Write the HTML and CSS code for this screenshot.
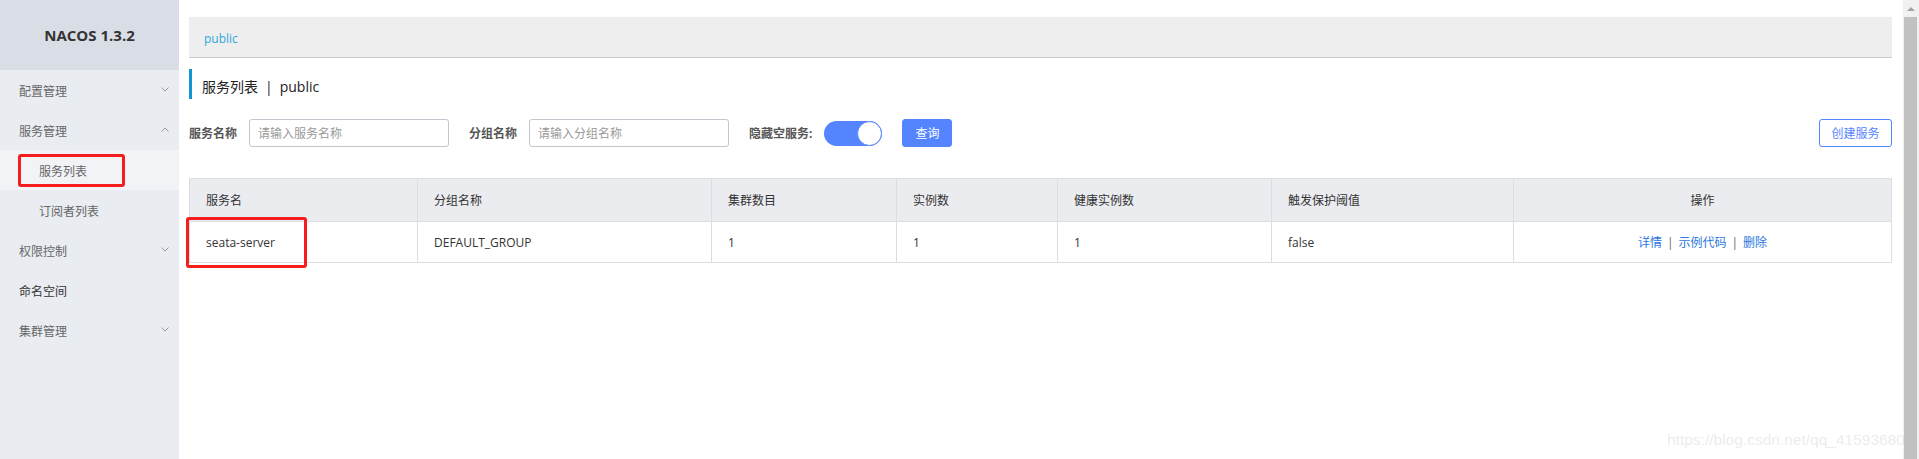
FILE: index.html
```html
<!DOCTYPE html>
<html lang="zh-CN">
<head>
    <meta charset="UTF-8">
    <title>Nacos - 服务列表</title>
    <link rel="stylesheet" href="styles.css">
</head>
<body>
<div class="layout">
    <aside class="sidebar">
        <div class="logo">NACOS 1.3.2</div>
        <ul class="menu">
            <li class="menu-item">
                <span>配置管理</span>
                <svg class="arrow" width="8" height="5" viewBox="0 0 8 5"><polyline points="0.5,0.5 4,4 7.5,0.5"/></svg>
            </li>
            <li class="menu-item">
                <span>服务管理</span>
                <svg class="arrow" width="8" height="5" viewBox="0 0 8 5"><polyline points="0.5,4.5 4,1 7.5,4.5"/></svg>
            </li>
            <li class="sub-item active">
                <span>服务列表</span>
                <i class="mark mark-menu"></i>
            </li>
            <li class="sub-item"><span>订阅者列表</span></li>
            <li class="menu-item">
                <span>权限控制</span>
                <svg class="arrow" width="8" height="5" viewBox="0 0 8 5"><polyline points="0.5,0.5 4,4 7.5,0.5"/></svg>
            </li>
            <li class="menu-item plain"><span>命名空间</span></li>
            <li class="menu-item">
                <span>集群管理</span>
                <svg class="arrow" width="8" height="5" viewBox="0 0 8 5"><polyline points="0.5,0.5 4,4 7.5,0.5"/></svg>
            </li>
        </ul>
    </aside>

    <main class="content">
        <div class="crumb"><span>public</span></div>

        <h2 class="page-title">服务列表<span class="sep">|</span>public</h2>

        <div class="search">
            <label class="field-label">服务名称</label>
            <input type="text" class="field" placeholder="请输入服务名称">
            <label class="field-label">分组名称</label>
            <input type="text" class="field" placeholder="请输入分组名称">
            <label class="field-label">隐藏空服务:</label>
            <span class="switch"><span class="knob"></span></span>
            <button class="btn btn-primary">查询</button>
            <button class="btn btn-outline">创建服务</button>
        </div>

        <table class="list">
            <colgroup>
                <col style="width: 228px">
                <col style="width: 294px">
                <col style="width: 185px">
                <col style="width: 161px">
                <col style="width: 214px">
                <col style="width: 242px">
                <col>
            </colgroup>
            <tr>
                <th>服务名</th>
                <th>分组名称</th>
                <th>集群数目</th>
                <th>实例数</th>
                <th>健康实例数</th>
                <th>触发保护阈值</th>
                <th class="center">操作</th>
            </tr>
            <tr>
                <td class="name-cell">seata-server<i class="mark mark-row"></i></td>
                <td>DEFAULT_GROUP</td>
                <td>1</td>
                <td>1</td>
                <td>1</td>
                <td>false</td>
                <td class="center">
                    <a class="link">详情</a><span class="bar">|</span><a class="link">示例代码</a><span class="bar">|</span><a class="link">删除</a>
                </td>
            </tr>
        </table>
    </main>

    <div class="scrollbar">
        <div class="scroll-up"></div>
        <div class="scroll-thumb"></div>
    </div>
</div>

<div class="watermark">https://blog.csdn.net/qq_41593680</div>
</body>
</html>
```

FILE: styles.css
```css
html, body {
    margin: 0;
    height: 459px;
    overflow: hidden;
}

body {
    font-family: "Open Sans", "Noto Sans CJK SC", sans-serif;
    font-size: 12px;
    color: #333333;
    background-color: #ffffff;
}

.layout {
    display: flex;
    height: 459px;
}

/* 左侧菜单 */
.sidebar {
    width: 179px;
    flex-shrink: 0;
    background-color: #e9ecf1;
}

.logo {
    height: 70px;
    line-height: 70px;
    text-align: center;
    background-color: #d9dde5;
    font-size: 15px;
    font-weight: bold;
    color: #333333;
}

.menu {
    list-style: none;
    margin: 0;
    padding: 0;
}

.menu-item,
.sub-item {
    display: flex;
    align-items: center;
    justify-content: space-between;
    height: 40px;
    padding: 2px 10px 0 19px;
    box-sizing: border-box;
    color: #666666;
}

.sub-item {
    padding-left: 39px;
}

.sub-item.active {
    position: relative;
    background-color: #f2f3f7;
}

.menu-item.plain {
    color: #333333;
}

.arrow {
    margin-top: -4px;
    fill: none;
    stroke: #999999;
    stroke-width: 1;
}

/* 红色标注框 */
.mark {
    position: absolute;
    box-sizing: border-box;
    border: 3px solid #f51d1d;
    border-radius: 3px;
}

.mark-menu {
    left: 18px;
    top: 4px;
    width: 107px;
    height: 33px;
}

.mark-row {
    left: -4px;
    top: -5px;
    width: 121px;
    height: 51px;
}

/* 右侧内容 */
.content {
    flex: 1;
    min-width: 0;
    padding: 17px 11px 0 10px;
}

.crumb {
    height: 40px;
    line-height: 44px;
    padding-left: 15px;
    background-color: #eeeeee;
    border-bottom: 1px solid #cccccc;
    color: #2fa9db;
}

.page-title {
    margin: 11px 0 0;
    height: 30px;
    padding: 5px 0 0 10px;
    box-sizing: border-box;
    line-height: 26px;
    border-left: 3px solid #0f97d4;
    font-size: 14px;
    font-weight: normal;
    color: #222222;
}

.sep {
    margin: 0 7px;
}

.search {
    display: flex;
    align-items: center;
    height: 28px;
    margin-top: 20px;
}

.field-label {
    margin-right: 12px;
    font-weight: bold;
    color: #555555;
}

.field {
    width: 200px;
    height: 28px;
    margin-right: 20px;
    padding: 0 8px;
    box-sizing: border-box;
    border: 1px solid #c4c6cf;
    border-radius: 3px;
    font-family: inherit;
    font-size: 12px;
    outline: none;
}

.field::placeholder {
    color: #999999;
}

.switch {
    display: flex;
    justify-content: flex-end;
    width: 58px;
    height: 25px;
    margin-right: 20px;
    border-radius: 13px;
    background-color: #5584ff;
}

.knob {
    width: 25px;
    height: 25px;
    box-sizing: border-box;
    border: 1px solid #5584ff;
    border-radius: 50%;
    background-color: #ffffff;
}

.btn {
    height: 28px;
    padding: 0;
    border-radius: 3px;
    font-family: inherit;
    font-size: 12px;
    cursor: pointer;
}

.btn-primary {
    width: 50px;
    border: 1px solid #5584ff;
    background-color: #5584ff;
    color: #ffffff;
}

.btn-outline {
    width: 73px;
    margin-left: auto;
    border: 1px solid #5584ff;
    background-color: #ffffff;
    color: #5584ff;
}

/* 服务表格 */
.list {
    width: 100%;
    margin-top: 31px;
    table-layout: fixed;
    border-collapse: collapse;
    border: 1px solid #dcdee3;
}

.list th,
.list td {
    padding: 0 16px;
    border: 1px solid #dcdee3;
    text-align: left;
    font-weight: normal;
    color: #333333;
}

.list th {
    height: 42px;
    background-color: #ebecf0;
}

.list td {
    height: 40px;
}

.list .center {
    text-align: center;
}

.name-cell {
    position: relative;
}

.link {
    color: #2a77e0;
    cursor: pointer;
}

.bar {
    margin: 0 5px;
    color: #666666;
}

/* 滚动条 */
.scrollbar {
    display: flex;
    flex-direction: column;
    width: 16px;
    flex-shrink: 0;
    background-color: #f1f1f1;
}

.scroll-up {
    height: 17px;
    display: flex;
    justify-content: center;
    align-items: center;
}

.scroll-up::before {
    content: "";
    border-left: 4px solid transparent;
    border-right: 4px solid transparent;
    border-bottom: 4px solid #a3a3a3;
}

.scroll-thumb {
    flex: 1;
    margin: 0 2px 0 1px;
    background-color: #c1c1c1;
}

.watermark {
    position: absolute;
    left: 1667px;
    top: 431px;
    font-family: "Liberation Sans", sans-serif;
    font-size: 15.5px;
    color: rgba(190, 190, 190, 0.3);
    white-space: nowrap;
}
```
